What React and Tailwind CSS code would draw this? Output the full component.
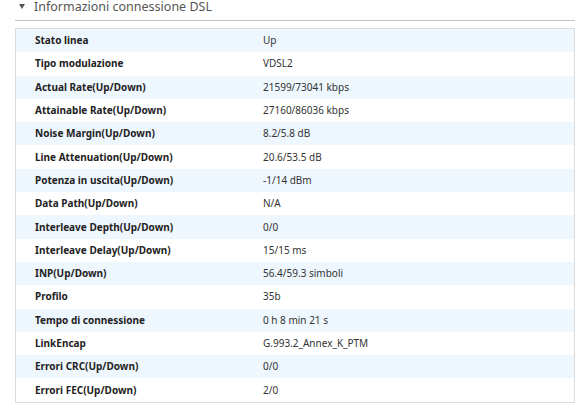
import React from "react";

const rows = [
  ["Stato linea", "Up"],
  ["Tipo modulazione", "VDSL2"],
  ["Actual Rate(Up/Down)", "21599/73041 kbps"],
  ["Attainable Rate(Up/Down)", "27160/86036 kbps"],
  ["Noise Margin(Up/Down)", "8.2/5.8 dB"],
  ["Line Attenuation(Up/Down)", "20.6/53.5 dB"],
  ["Potenza in uscita(Up/Down)", "-1/14 dBm"],
  ["Data Path(Up/Down)", "N/A"],
  ["Interleave Depth(Up/Down)", "0/0"],
  ["Interleave Delay(Up/Down)", "15/15 ms"],
  ["INP(Up/Down)", "56.4/59.3 simboli"],
  ["Profilo", "35b"],
  ["Tempo di connessione", "0 h 8 min 21 s"],
  ["LinkEncap", "G.993.2_Annex_K_PTM"],
  ["Errori CRC(Up/Down)", "0/0"],
  ["Errori FEC(Up/Down)", "2/0"],
];

export default function App() {
  return (
    <div className="w-[582px] h-[412px] bg-white font-['Noto_Sans',sans-serif] text-[#333]">
      {/* Section header */}
      <div className="ml-[15px] w-[560px] h-[21px] border-b border-[#c4c4c4] flex items-start">
        <svg className="ml-[4px] mt-[4px]" width="6" height="5" viewBox="0 0 6 5">
          <path d="M0 0 H6 L3 5 Z" fill="#555" />
        </svg>
        <span className="ml-[9px] text-[12.5px] text-[#555] leading-[13px]">
          Informazioni connessione DSL
        </span>
      </div>

      {/* Info table */}
      <div className="ml-[15px] mt-[7px] w-[560px] border border-[#dcdcdc]">
        {rows.map(([label, value], i) => (
          <div
            key={label}
            className={`flex items-center h-[23.3px] text-[10px] ${
              i % 2 === 0 ? "bg-[#eef6fe]" : "bg-white"
            }`}
          >
            <span className="w-[247px] pl-[19px] font-bold text-[#222]">
              {label}
            </span>
            <span className="text-[#333]">{value}</span>
          </div>
        ))}
      </div>
    </div>
  );
}
